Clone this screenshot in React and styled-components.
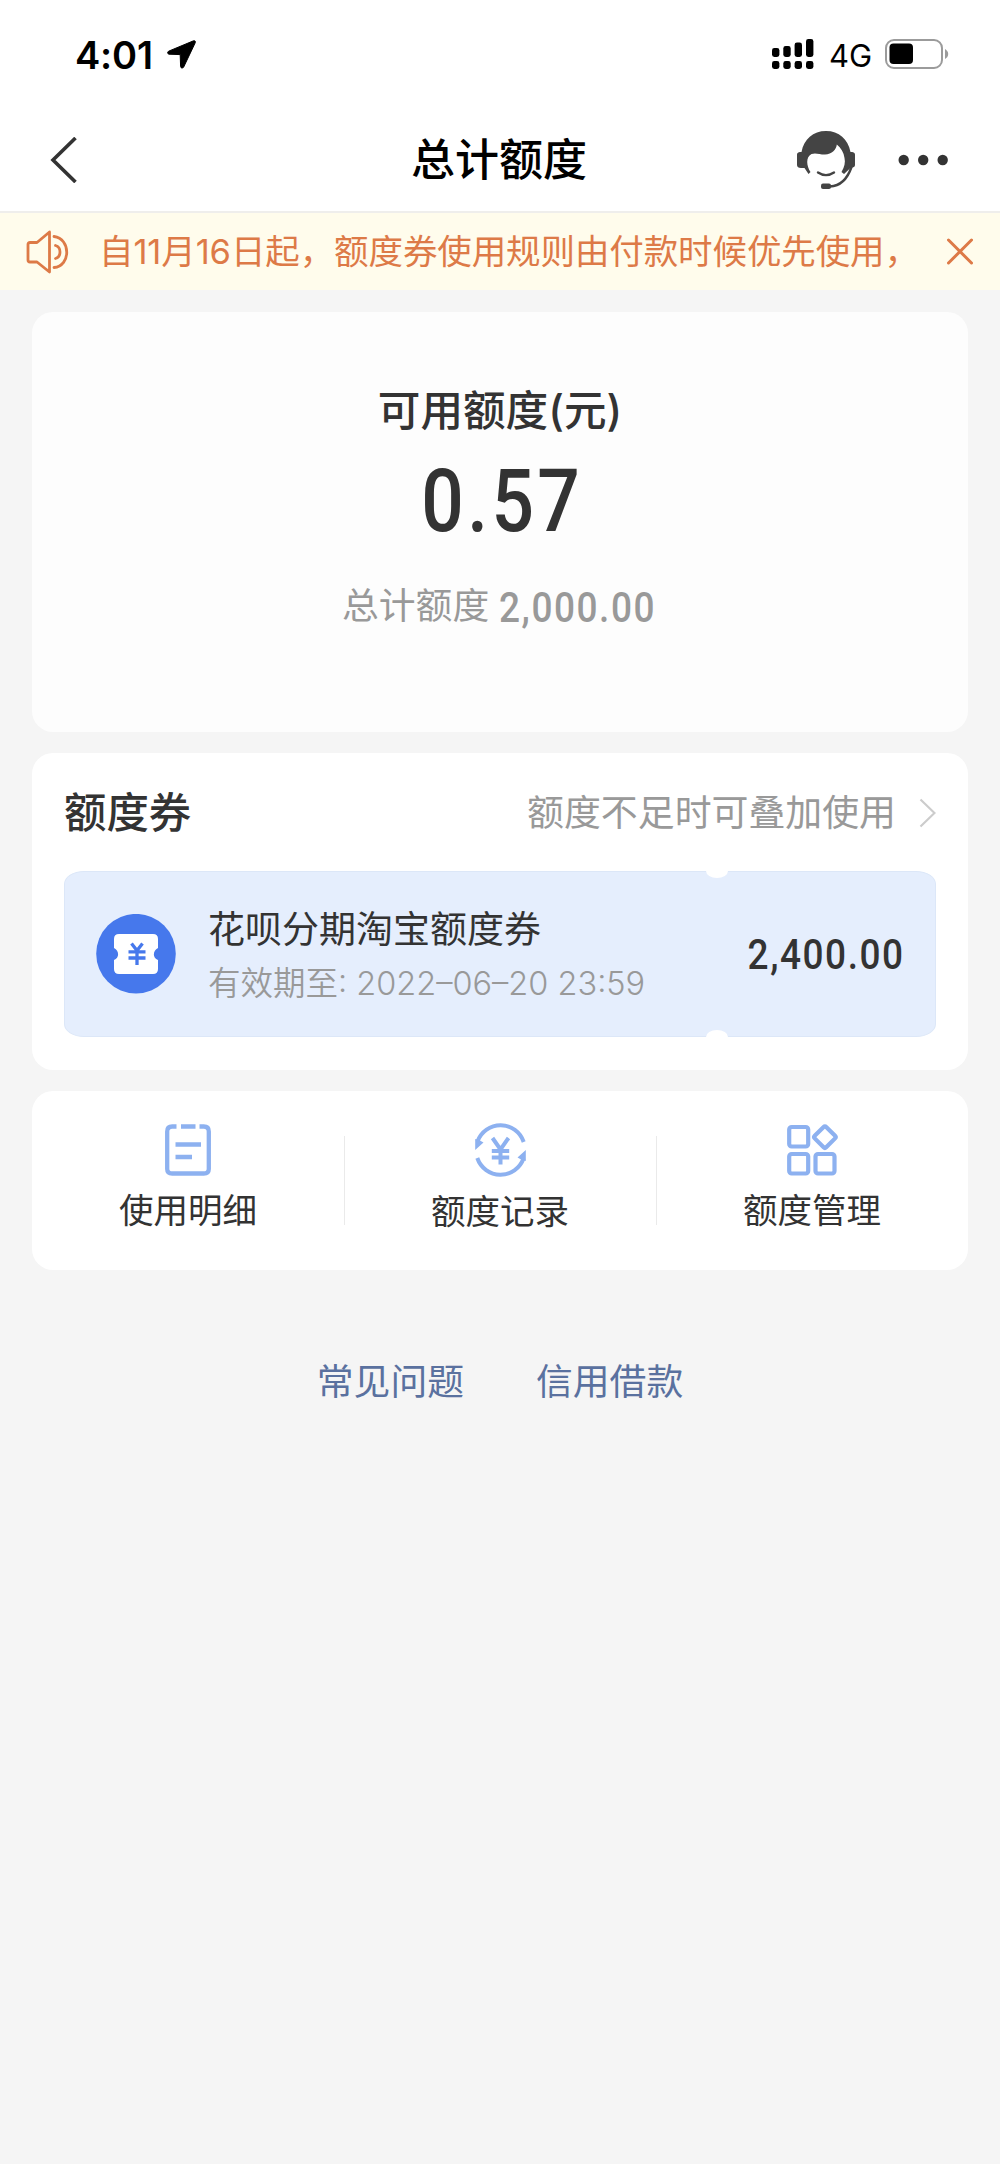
import React from "react";
import styled, { createGlobalStyle } from "styled-components";

const Global = createGlobalStyle`
  * { box-sizing: border-box; }
  body { margin: 0; background: #f5f5f5; }
`;

const Screen = styled.div`
  width: 1000px;
  height: 2164px;
  display: flex;
  flex-direction: column;
  overflow: hidden;
  background: #f5f5f5;
  color: #333;
  font-family: Inter, "Noto Sans CJK SC", sans-serif;
  svg { display: block; flex: none; }
`;

const StatusBar = styled.div`
  height: 108px;
  flex: none;
  padding: 0 51px 0 75px;
  display: flex;
  align-items: center;
  background: #fff;
  color: #000;
`;

const Time = styled.span`
  width: 91px;
  font-size: 38px;
  font-weight: 600;
  line-height: 44px;
  padding-top: 2px;
  letter-spacing: -0.2px;
`;

const StatusRight = styled.div`
  margin-left: auto;
  display: flex;
  align-items: center;
`;

const Network = styled.span`
  width: 56px;
  margin-left: 15px;
  padding-top: 3px;
  font-size: 31px;
  line-height: 36px;
`;

const Header = styled.header`
  height: 105px;
  flex: none;
  padding: 0 52px 0 50px;
  display: grid;
  grid-template-columns: 1fr auto 1fr;
  align-items: center;
  background: #fff;
  border-bottom: 2px solid #efeeec;
`;

const Title = styled.h1`
  margin: 0;
  color: #000;
  font-size: 44px;
  font-weight: 500;
  line-height: 60px;
`;

const HeaderActions = styled.div`
  display: flex;
  align-items: center;
  justify-content: flex-end;
  gap: 43px;
`;

const Notice = styled.div`
  height: 77px;
  flex: none;
  padding: 0 27px 0 26px;
  display: flex;
  align-items: center;
  background: #fffcec;
  color: #dd7a47;
`;

const NoticeText = styled.span`
  margin-left: 29px;
  flex: 1;
  font-size: 34.5px;
  line-height: 50px;
  letter-spacing: -0.1px;
  white-space: nowrap;
`;

const Content = styled.main`
  padding: 22px 32px 0;
  display: flex;
  flex-direction: column;
  gap: 21px;
`;

const Card = styled.section`
  height: ${(p) => p.$height}px;
  border-radius: 21px;
  background: ${(p) => p.$tone || "#fff"};
`;

const Summary = styled(Card)`
  padding-top: 68px;
  display: flex;
  flex-direction: column;
  align-items: center;
`;

const SummaryLabel = styled.div`
  font-size: 42.6px;
  font-weight: 500;
  line-height: 62px;
`;

const Figure = styled.span`
  display: inline-block;
  font-family: Roboto, sans-serif;
  font-weight: 500;
  font-size: ${(p) => p.$size}px;
  line-height: 1.2;
  letter-spacing: ${(p) => p.$spacing}px;
  margin-right: -${(p) => p.$spacing}px;
  padding-top: 2px;
  transform: scaleX(0.86);
  transform-origin: ${(p) => p.$origin || "center"};
`;

const Balance = styled.div`
  height: 104px;
  margin-top: 6px;
  display: flex;
  align-items: center;
`;

const Total = styled.div`
  width: 316px;
  height: 54px;
  margin-top: 28px;
  display: flex;
  align-items: center;
  gap: 10px;
  color: #999;
  font-size: 36.8px;
  white-space: nowrap;
`;

const TotalLabel = styled.span`
  line-height: 50px;
  padding-bottom: 3px;
`;

const CouponCard = styled(Card)`
  padding: 0 32px;
`;

const CouponHead = styled.div`
  height: 118px;
  padding-top: 2px;
  display: flex;
  align-items: center;
  justify-content: space-between;
`;

const SectionTitle = styled.h2`
  margin: 0;
  font-size: 42.4px;
  font-weight: 500;
  line-height: 60px;
`;

const Hint = styled.div`
  display: flex;
  align-items: center;
  gap: 23px;
  color: #999;
  font-size: 36.9px;
  line-height: 54px;
`;

const Coupon = styled.div`
  position: relative;
  height: 166px;
  padding: 0 32px 0 31px;
  display: flex;
  align-items: center;
  border: 1px solid #dce7f8;
  border-radius: 20px / 13px;
  background: #e5eefd;
`;

const Notch = styled.i`
  position: absolute;
  left: 641px;
  ${(p) => p.$side}: -2px;
  width: 22px;
  height: 8px;
  background: #fff;
  border-radius: ${(p) => (p.$side === "top" ? "0 0 11px 11px / 0 0 7px 7px" : "11px 11px 0 0 / 7px 7px 0 0")};
`;

const CouponText = styled.div`
  margin-left: 32px;
  padding-top: 4px;
  flex: 1;
  white-space: nowrap;
`;

const CouponName = styled.div`
  font-size: 37px;
  line-height: 56px;
`;

const CouponDate = styled.div`
  color: #999;
  font-size: 32.5px;
  font-weight: 350;
  line-height: 52px;
`;

const Actions = styled(Card)`
  display: grid;
  grid-template-columns: repeat(3, 1fr);
`;

const Action = styled.div`
  padding-top: ${(p) => p.$top}px;
  display: flex;
  flex-direction: column;
  align-items: center;
  gap: 10px;
  font-size: 34.5px;
  line-height: 50px;
  background: linear-gradient(#eaeaea, #eaeaea) no-repeat 0 45px / ${(p) => (p.$divided ? "1px" : "0")} 89px;
`;

const Links = styled.nav`
  margin-top: 64px;
  display: flex;
  justify-content: center;
  gap: 72px;
  color: #5a719f;
  font-size: 36.8px;
  line-height: 54px;
`;

const LocationArrow = () => (
  <svg width="31" height="31" viewBox="0 0 31 31">
    <path d="M27.5 1.8 2.6 12.2C1.2 13 1.4 15 3 15.2L14.2 15.6 14.6 27.4C14.8 29.4 16.8 29.6 17.7 28L29.2 3.8C29.8 2.2 28.8 1.3 27.5 1.8Z" stroke="#000" strokeLinejoin="round" />
  </svg>
);

const Signal = () => (
  <svg width="42" height="32" viewBox="0 0 42 32">
    {[[0, 10, 9], [11.3, 8, 11], [22.6, 4.5, 14.5], [34, 1, 18]].map(([x, y, h]) => (
      <g key={x}>
        <rect x={x} y={y} width="7.4" height={h} rx="2.4" />
        <rect x={x} y="23" width="7.4" height="8" rx="2.4" />
      </g>
    ))}
  </svg>
);

const Battery = () => (
  <svg width="64" height="30" viewBox="0 0 64 30">
    <rect x="1" y="1" width="56" height="28" rx="8" fill="none" stroke="#9b9b9b" strokeWidth="2" />
    <rect x="4.5" y="4.5" width="23.5" height="20.5" rx="4" />
    <path d="M60 10C62 11 63.2 13 63.2 15S62 19 60 20Z" fill="#9b9b9b" />
  </svg>
);

const BackIcon = () => (
  <svg width="27" height="46" viewBox="0 0 27 46" fill="none" stroke="#333" strokeWidth="3.6">
    <path d="M25.5 1 3 23 25.5 45" />
  </svg>
);

const ServiceIcon = () => (
  <svg width="58" height="60" viewBox="0 0 58 60">
    <path fill="#444" d="M0 24.5C0 22.5 2 22 4.5 22C7 9 16 1 29 1S51 9 53.5 22C56 22 58 22.5 58 24.5V35C58 37 56.5 37.5 54 37.5L47 44 44.5 42C47.5 37 48.5 32 47.500 28C46.8 22.5 44 18 39.8 14.5C39.5 19 35 24.5 28 24.5C22 24.5 19 22.5 14.5 24C8.5 27 9.5 36 13.5 42L11.5 44 7.5 38H4C1.5 38 0 37 0 35Z" />
    <path d="M21 42.5Q29 47.8 37 42.5M54.5 37C50 50 43 56 33 56.5" fill="none" stroke="#444" strokeWidth="2.4" strokeLinecap="round" />
    <rect x="24" y="53.5" width="10" height="5.5" rx="2" fill="#444" />
  </svg>
);

const MoreIcon = () => (
  <svg width="50" height="12" viewBox="0 0 50 12" fill="#333">
    <circle cx="5.7" cy="6" r="5.2" />
    <circle cx="25.2" cy="6" r="5.2" />
    <circle cx="44.7" cy="6" r="5.2" />
  </svg>
);

const SpeakerIcon = () => (
  <svg width="44" height="44" viewBox="0 0 44 44" fill="none" stroke="#dd7a47" strokeWidth="2.8" strokeLinecap="round" strokeLinejoin="round">
    <path d="M11 12.5H4Q2 12.5 2 14.5V30Q2 32 4 32H11L23.500 42V2L11 12.500ZM28 6.500C45 8.500 45 36 28 37.500M29.500 15.500C35.500 17 35.500 27 29.500 28.500" />
  </svg>
);

const CloseIcon = () => (
  <svg width="26" height="28" viewBox="0 0 26 28" fill="none" stroke="#dd7a47" strokeWidth="3" strokeLinecap="round">
    <path d="M1.5 2 24.5 25M24.5 2 1.5 25" />
  </svg>
);

const ChevronIcon = () => (
  <svg width="17" height="30" viewBox="0 0 17 30" fill="none" stroke="#ccc" strokeWidth="2.2">
    <path d="M1.5 1.500 15.5 15 1.5 28.500" />
  </svg>
);

const CouponIcon = () => (
  <svg width="80" height="80" viewBox="0 0 80 80">
    <circle cx="40" cy="39.7" r="39.800" fill="#4678ec" />
    <path fill="#fff" d="M23 20H57Q62 20 62 25V34C56.500 37 56.500 44 62 46V55Q62 60 57 60H23Q18 60 18 55V46C23.500 44 23.500 37 18 34V25Q18 20 23 20Z" />
    <path d="M35.500 29.500 41 36.500 46.500 29.500M41 36.500V51M32.500 37.800H49.500M32.500 44H49.500" fill="none" stroke="#4678ec" strokeWidth="3.300" />
  </svg>
);

const DetailIcon = () => (
  <svg width="46" height="52" viewBox="0 0 46 52" fill="none" stroke="#8db1f0" strokeWidth="4.3">
    <path d="M11.500 2.500H7.200Q2.200 2.500 2.200 7.500V45Q2.200 49.500 7.200 49.500H38.800Q43.800 49.500 43.800 45V7.500Q43.800 2.500 38.800 2.500H34.500M16 2.500H30.500M10.500 20.500H36M10.500 33H27" />
  </svg>
);

const RecordIcon = () => (
  <svg width="51" height="54" viewBox="0 0 51 54" fill="none" stroke="#8db1f0" strokeWidth="4">
    <path d="M2.500 18.500A24.500 24.800 0 0 1 48.700 19M48.500 35.500A24.500 24.800 0 0 1 2.300 35" />
    <path d="M0.200 16V27L8.500 19.500 4 17ZM50.800 38V27L42.500 34.500 47 37Z" fill="#8db1f0" stroke="none" />
    <path d="M17.500 15 25.500 26.500 33.500 15M25.500 26.500V41.500M16.800 28H34.200M16.800 34.500H34.200" />
  </svg>
);

const ManageIcon = () => (
  <svg width="51" height="52" viewBox="0 0 51 52" fill="none" stroke="#8db1f0" strokeWidth="4.200">
    <rect x="2.200" y="3" width="19" height="19.500" rx="2.500" />
    <rect x="2.200" y="30" width="19" height="19.500" rx="2.500" />
    <rect x="28.500" y="30" width="19" height="19.500" rx="2.500" />
    <rect x="29.800" y="5" width="16.200" height="16.200" rx="1.800" transform="rotate(45 37.900 13.100)" />
  </svg>
);

export default function App() {
  return (
    <Screen>
      <Global />
      <StatusBar>
        <Time>4:01</Time>
        <LocationArrow />
        <StatusRight>
          <Signal />
          <Network>4G</Network>
          <Battery />
        </StatusRight>
      </StatusBar>
      <Header>
        <BackIcon />
        <Title>总计额度</Title>
        <HeaderActions>
          <ServiceIcon />
          <MoreIcon />
        </HeaderActions>
      </Header>
      <Notice>
        <SpeakerIcon />
        <NoticeText>自11月16日起，额度券使用规则由付款时候优先使用，</NoticeText>
        <CloseIcon />
      </Notice>
      <Content>
        <Summary $height={420} $tone="#fdfdfd">
          <SummaryLabel>可用额度(元)</SummaryLabel>
          <Balance>
            <Figure $size={87} $spacing={4}>0.57</Figure>
          </Balance>
          <Total>
            <TotalLabel>总计额度</TotalLabel>
            <Figure $size={43} $spacing={1.8} $origin="left">2,000.00</Figure>
          </Total>
        </Summary>
        <CouponCard $height={317}>
          <CouponHead>
            <SectionTitle>额度券</SectionTitle>
            <Hint>
              额度不足时可叠加使用
              <ChevronIcon />
            </Hint>
          </CouponHead>
          <Coupon>
            <Notch $side="top" />
            <Notch $side="bottom" />
            <CouponIcon />
            <CouponText>
              <CouponName>花呗分期淘宝额度券</CouponName>
              <CouponDate>有效期至: 2022–06–20 23:59</CouponDate>
            </CouponText>
            <Figure $size={43} $spacing={1.8} $origin="right">2,400.00</Figure>
          </Coupon>
        </CouponCard>
        <Actions $height={179}>
          <Action $top={33}>
            <DetailIcon />
            使用明细
          </Action>
          <Action $top={32} $divided>
            <RecordIcon />
            额度记录
          </Action>
          <Action $top={33} $divided>
            <ManageIcon />
            额度管理
          </Action>
        </Actions>
        <Links>
          <span>常见问题</span>
          <span>信用借款</span>
        </Links>
      </Content>
    </Screen>
  );
}
